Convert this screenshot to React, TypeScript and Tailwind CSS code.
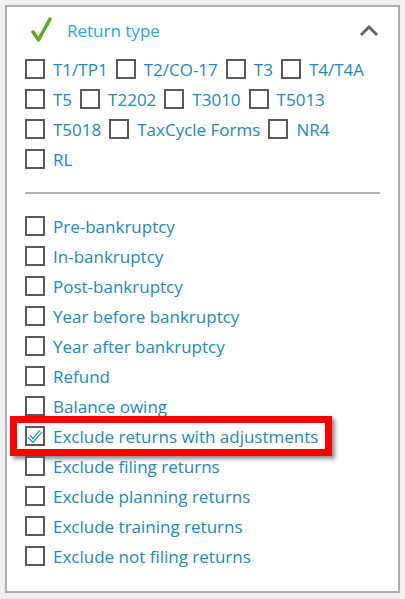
import React from "react"

const typeRows: string[][] = [
  ["T1/TP1", "T2/CO-17", "T3", "T4/T4A"],
  ["T5", "T2202", "T3010", "T5013"],
  ["T5018", "TaxCycle Forms", "NR4"],
  ["RL"],
]

const filters = [
  "Pre-bankruptcy",
  "In-bankruptcy",
  "Post-bankruptcy",
  "Year before bankruptcy",
  "Year after bankruptcy",
  "Refund",
  "Balance owing",
  "Exclude returns with adjustments",
  "Exclude filing returns",
  "Exclude planning returns",
  "Exclude training returns",
  "Exclude not filing returns",
]

const Box = ({ checked }: { checked?: boolean }) => (
  <span className="flex h-5 w-5 shrink-0 items-center justify-center border-2 border-[#5a5a5a] bg-white">
    {checked && (
      <svg width="16" height="16" viewBox="0 0 16 16">
        <path d="M2 8.5 L6 12.5 L14 3" fill="none" stroke="#2a9fd6" strokeWidth="4" strokeLinejoin="miter" />
        <path d="M2 8.5 L6 12.5 L14 3" fill="none" stroke="#ffffff" strokeWidth="1.2" />
      </svg>
    )}
  </span>
)

const Item = ({ label, checked }: { label: string; checked?: boolean }) => (
  <label className="flex items-center gap-2">
    <Box checked={checked} />
    <span className="whitespace-nowrap">{label}</span>
  </label>
)

export default function App() {
  return (
    <div
      className="h-[599px] w-[405px] bg-[#f0f0f0] p-[5px] text-[17px] leading-none text-[#1a88c2]"
      style={{ fontFamily: "'Open Sans', 'Noto Sans', sans-serif" }}
    >
      <div className="relative h-[588px] border-2 border-[#adadad] bg-white px-[18px]">
        <div className="flex h-[47px] items-center">
          <svg width="22" height="26" viewBox="0 0 22 26" className="ml-[6px] mt-[-2px]">
            <path d="M2 15 L7.5 23 L19 2" fill="none" stroke="#5aab1e" strokeWidth="3.5" strokeLinecap="round" strokeLinejoin="round" />
          </svg>
          <span className="ml-[14px] text-[#2aa5dd]">Return type</span>
          <svg width="20" height="12" viewBox="0 0 20 12" className="ml-auto mr-[1px]">
            <path d="M2 10 L10 2 L18 10" fill="none" stroke="#666666" strokeWidth="3" />
          </svg>
        </div>

        <div className="flex flex-col">
          {typeRows.map((row, i) => (
            <div key={i} className="flex h-[30px] items-center gap-2">
              {row.map((t) => (
                <Item key={t} label={t} />
              ))}
            </div>
          ))}
        </div>

        <div className="mt-[18px] h-[2px] bg-[#b0b0b0]" />

        <div className="mt-[17px] flex flex-col">
          {filters.map((f) => {
            const hl = f === "Exclude returns with adjustments"
            return (
              <div key={f} className="relative flex h-[30px] items-center">
                {hl && (
                  <span className="absolute -left-[15px] -top-[5px] h-[40px] w-[322px] border-[7px] border-[#ff0000] shadow-[3px_3px_4px_rgba(0,0,0,0.45)]" />
                )}
                <Item label={f} checked={hl} />
              </div>
            )
          })}
        </div>
      </div>
    </div>
  )
}
